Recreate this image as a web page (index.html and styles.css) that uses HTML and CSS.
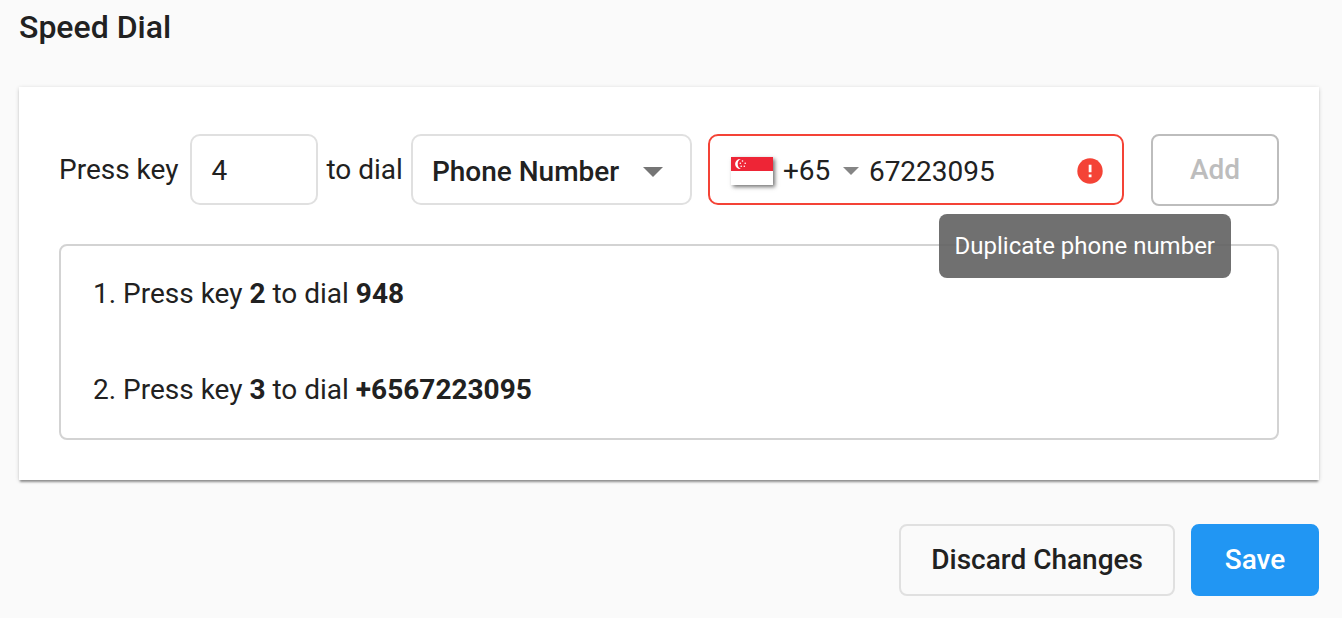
FILE: index.html
```html
<!DOCTYPE html>
<html lang="en">
<head>
<meta charset="utf-8">
<meta name="viewport" content="width=device-width, initial-scale=1">
<title>Speed Dial</title>
<link rel="stylesheet" href="styles.css">
</head>
<body>
<main class="page">
  <h1 class="title">Speed Dial</h1>
  <form class="form">
    <section class="card">
      <div class="entry">
        <label class="label" for="key">Press key</label>
        <input class="field key" id="key" type="text" value="4">
        <label class="label label-dial" for="type">to dial</label>
        <div class="field picker">
          <select class="select type" id="type"><option>Phone Number</option></select>
          <svg class="arrow" width="20" height="10" viewBox="0 0 20 10" aria-hidden="true"><path d="M0 0h20L10 10z" fill="#757575"/></svg>
        </div>
        <div class="field phone">
          <svg class="flag" width="42" height="28" viewBox="0 0 42 28" aria-hidden="true">
            <path fill="#fff" d="M0 0h42v28H0z"/>
            <path fill="#ee2536" d="M0 0h42v14H0z"/>
            <path fill="#fff" d="M9.800 2A5 5 0 1 0 9.800 11.900A5.500 5.500 0 0 1 9.800 2z"/>
            <g fill="#fff"><circle cx="11.500" cy="4" r=".8"/><circle cx="9.300" cy="6.200" r=".8"/><circle cx="14.200" cy="6.200" r=".8"/><circle cx="10.200" cy="9.300" r=".8"/><circle cx="13.300" cy="9.300" r=".8"/></g>
          </svg>
          <div class="code">
            <select class="select" aria-label="Country code"><option>+65</option></select>
            <svg class="arrow" width="16" height="8" viewBox="0 0 16 8" aria-hidden="true"><path d="M0 0h16L8 8z" fill="#858585"/></svg>
          </div>
          <input class="number" type="tel" value="67223095" aria-label="Phone number" aria-invalid="true" aria-describedby="error">
          <svg class="alert" width="26" height="26" viewBox="0 0 26 26" aria-hidden="true"><circle cx="13" cy="13" r="12.700" fill="#f44336"/><path d="M11.700 6.700h2.800v7.600h-2.800zM11.700 16.600h2.800v2.700h-2.800z" fill="#fff"/></svg>
          <div class="tooltip" id="error" role="tooltip">Duplicate phone number</div>
        </div>
        <button class="button add" type="button" disabled>Add</button>
      </div>
      <div class="list">
        <p class="item">1. Press key <b>2</b> to dial <b>948</b></p>
        <p class="item">2. Press key <b>3</b> to dial <b>+6567223095</b></p>
      </div>
    </section>
    <div class="actions">
      <button class="button discard" type="button">Discard Changes</button>
      <button class="button save" type="button">Save</button>
    </div>
  </form>
</main>
</body>
</html>
```
FILE: styles.css
```css
* { box-sizing: border-box; }
body {
  margin: 0;
  background: #fafafa;
  color: #212121;
  font: 400 28px/40px Roboto, "Liberation Sans", sans-serif;
}
input, select, button { font: inherit; color: inherit; }
.page { padding: 7px 23px 22px 19px; }
.title { margin: 0; font-size: 32px; font-weight: 500; line-height: 40px; }
.card {
  margin-top: 40px;
  padding: 47px 40px 40px;
  background: #fff;
  box-shadow: 0 3px 2px -1px rgba(0, 0, 0, .35), 0 1px 4px rgba(0, 0, 0, .18);
}
.entry { display: flex; align-items: flex-start; }
.label { line-height: 72px; height: 71px; margin-right: 12px; white-space: nowrap; }
.label-dial { margin: 0 8px; }
.field {
  height: 71px;
  border: 2px solid #e0e0e0;
  border-radius: 10px;
  background: #fff;
}
.key { width: 128px; padding: 2px 19px 0; }
.picker { width: 281px; margin-right: 16px; }
.picker, .code { display: grid; align-items: center; }
.picker > *, .code > * { grid-area: 1 / 1; }
.select {
  width: 100%;
  border: 0;
  padding: 0;
  appearance: none;
  background: transparent;
}
.type { height: 100%; padding: 4px 19px 0; font-weight: 500; }
.arrow { justify-self: end; pointer-events: none; }
.picker .arrow { margin: 4px 27px 0 0; }
.phone {
  position: relative;
  flex: 1;
  min-width: 0;
  display: flex;
  align-items: center;
  padding: 2px 19px 0 21px;
  border-color: #f44336;
}
.flag { flex: none; box-shadow: 2px 2px 4px rgba(0, 0, 0, .55); }
.code { width: 76px; margin: 0 10px; }
.number {
  flex: 1;
  min-width: 0;
  border: 0;
  padding: 2px 0 0;
  background: transparent;
}
.alert { flex: none; }
.tooltip {
  position: absolute;
  top: 78px;
  right: -109px;
  padding: 12px 16px;
  border-radius: 8px;
  background: rgba(97, 97, 97, .9);
  color: #fff;
  font-size: 24px;
  white-space: nowrap;
}
.button {
  height: 72px;
  border: 2px solid #e0e0e0;
  border-radius: 8px;
  padding: 0 30px;
  background: transparent;
  font-weight: 500;
}
.add { width: 128px; margin-left: 27px; border-color: #bdbdbd; color: #bdbdbd; }
.list {
  margin-top: 38px;
  padding: 0 32px;
  border: 2px solid #d3d3d3;
  border-radius: 8px;
}
.item { margin: 0; line-height: 96px; }
.item b { font-weight: 700; }
.actions { display: flex; justify-content: flex-end; gap: 16px; margin-top: 44px; }
.save { width: 128px; border-color: #2196f3; background: #2196f3; color: #fff; }
```
